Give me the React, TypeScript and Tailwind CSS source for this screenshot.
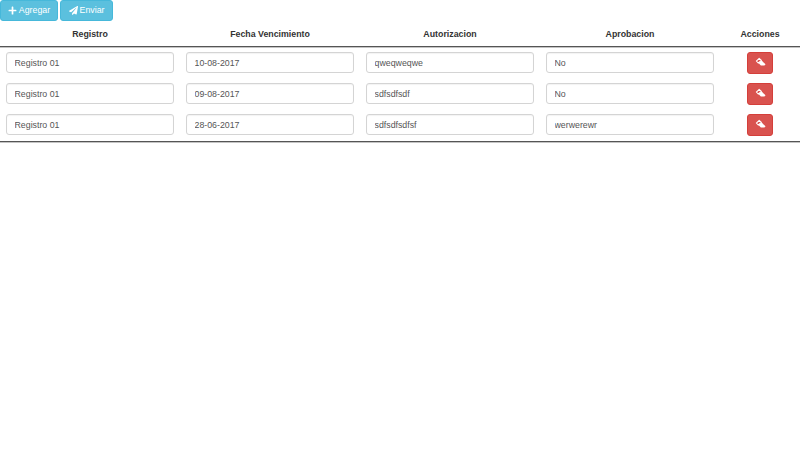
import React from "react";
import { FaPlus, FaPaperPlane } from "react-icons/fa";

const Eraser = () => (
  <svg width="11" height="11" viewBox="0 0 12 12">
    <path d="M4.6 1.6 1.6 4.4l2 2.2 3.2-3z" fill="none" stroke="#fff" strokeWidth="1.2" />
    <path d="M6.9 3.6 3.8 6.6l2.6 2.8h3.9l1.2-1.4z" fill="#fff" />
  </svg>
);

const rows = [
  ["Registro 01", "10-08-2017", "qweqweqwe", "No"],
  ["Registro 01", "09-08-2017", "sdfsdfsdf", "No"],
  ["Registro 01", "28-06-2017", "sdfsdfsdfsf", "werwerewr"],
];
const heads = ["Registro", "Fecha Vencimiento", "Autorizacion", "Aprobacion", "Acciones"];

export default function App() {
  return (
    <div className="w-[800px] h-[450px] bg-white overflow-hidden text-[8.8px] leading-[13px] text-[#333] font-['Liberation_Sans',Arial,sans-serif]">
      <div className="flex gap-[2px] h-[22px]">
        <button className="w-[58px] h-[21px] flex items-center justify-center gap-[2px] rounded-[3px] bg-[#5bc0de] border border-[#46b8da] text-white text-[8.8px]">
          <FaPlus className="w-[9px] h-[9px]" />
          Agregar
        </button>
        <button className="w-[53px] h-[21px] flex items-center justify-center gap-[2px] rounded-[3px] bg-[#5bc0de] border border-[#46b8da] text-white text-[8.8px]">
          <FaPaperPlane className="w-[9px] h-[9px]" />
          Enviar
        </button>
      </div>
      <div className="grid grid-cols-[180px_180px_180px_180px_80px] h-[24px] border-b border-[#555] box-content shadow-[0_1px_0_#c4c4c4]">
        {heads.map((h) => (
          <div key={h} className="flex items-center justify-center font-bold">{h}</div>
        ))}
      </div>
      <div className="pb-[1px] border-b border-[#555] w-full shadow-[0_1px_0_#c4c4c4]">
        {rows.map((r, i) => (
          <div key={i} className="grid grid-cols-[180px_180px_180px_180px_80px] h-[31px] items-center">
            {r.map((v, j) => (
              <div key={j} className="px-[6px]">
                <input
                  readOnly
                  value={v}
                  className="w-[168px] h-[21px] px-[7.5px] bg-white border border-[#d4d4d4] rounded-[3px] text-[#555] text-[8.8px] shadow-[inset_0_1px_1px_rgba(0,0,0,0.05)] outline-none"
                />
              </div>
            ))}
            <div className="flex justify-center">
              <button className="w-[26px] h-[22px] flex items-center justify-center rounded-[3px] bg-[#d9534f] border border-[#d43f3a]">
                <Eraser />
              </button>
            </div>
          </div>
        ))}
      </div>
    </div>
  );
}
